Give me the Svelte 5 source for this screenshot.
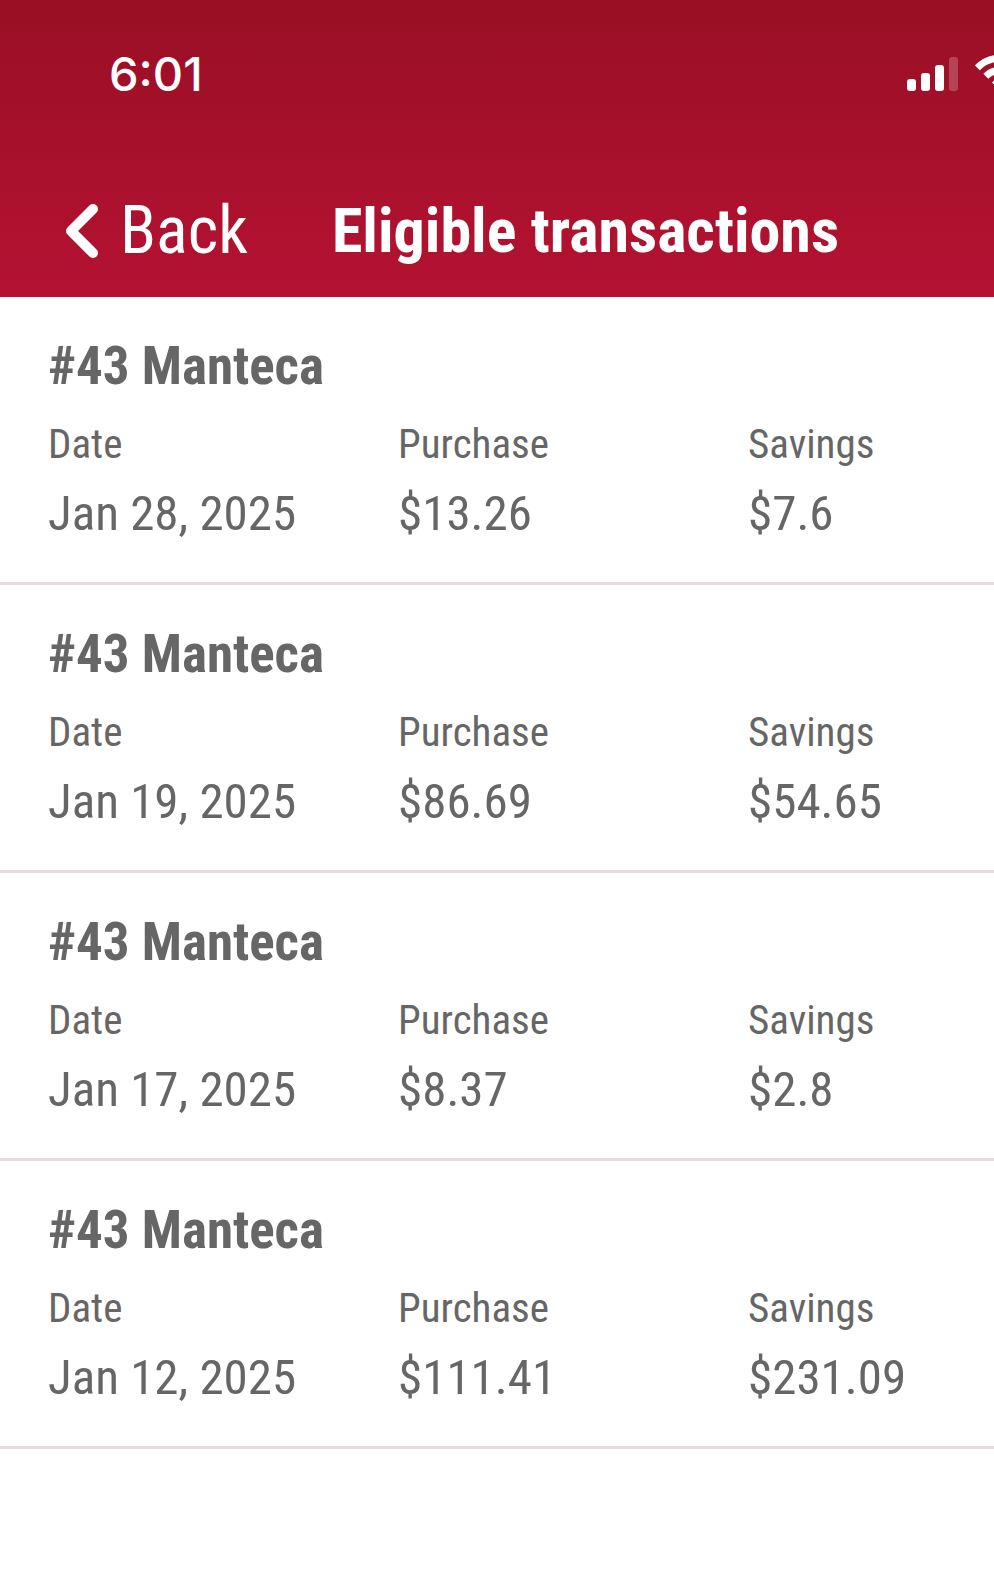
<script>
	const transactions = [
		{ store: '#43 Manteca', date: 'Jan 28, 2025', purchase: '$13.26', savings: '$7.6' },
		{ store: '#43 Manteca', date: 'Jan 19, 2025', purchase: '$86.69', savings: '$54.65' },
		{ store: '#43 Manteca', date: 'Jan 17, 2025', purchase: '$8.37', savings: '$2.8' },
		{ store: '#43 Manteca', date: 'Jan 12, 2025', purchase: '$111.41', savings: '$231.09' }
	];
</script>

<header>
	<div class="status-bar">
		<span class="clock">6:01</span>
		<div class="status-icons">
			<svg width="51" height="34" viewBox="0 0 51 34" fill="#fff" aria-hidden="true">
				<rect x="0" y="22" width="9" height="12" rx="3" />
				<rect x="14" y="16" width="9" height="18" rx="3" />
				<rect x="28" y="8" width="9" height="26" rx="3" />
				<rect x="42" y="0" width="9" height="34" rx="3" opacity="0.22" />
			</svg>
			<svg width="51" height="36" viewBox="0 0 51 36" fill="none" stroke="#fff" stroke-width="7" aria-hidden="true">
				<path d="M2.3 12.8a32.8 32.8 0 0 1 46.4 0" />
				<path d="M10.8 21.3a20.8 20.8 0 0 1 29.4 0" />
				<path d="M17 27.5a12 12 0 0 1 17 0L25.500 36Z" fill="#fff" stroke="none" />
			</svg>
		</div>
	</div>
	<nav>
		<button type="button">
			<svg width="32" height="54" viewBox="0 0 32 54" fill="none" stroke="#fff" stroke-width="10" stroke-linecap="round" stroke-linejoin="round" aria-hidden="true">
				<path d="M27 5 5 27l22 22" />
			</svg>
			Back
		</button>
		<h1>Eligible transactions</h1>
	</nav>
</header>

<main>
	{#each transactions as item}
		<article>
			<h2>{item.store}</h2>
			<dl>
				<div>
					<dt>Date</dt>
					<dd>{item.date}</dd>
				</div>
				<div>
					<dt>Purchase</dt>
					<dd>{item.purchase}</dd>
				</div>
				<div>
					<dt>Savings</dt>
					<dd>{item.savings}</dd>
				</div>
			</dl>
		</article>
	{/each}
</main>

<style>
	:global(body) {
		margin: 0;
		background: #fff;
		color: #666;
		font-family: 'Roboto Condensed', 'Liberation Sans Narrow', Roboto, sans-serif;
	}

	header {
		overflow: hidden;
		background: linear-gradient(#990f24, #b51232);
		color: #fff;
	}

	.status-bar {
		display: flex;
		justify-content: space-between;
		align-items: flex-end;
		padding: 55px 0 0 109px;
	}

	.clock {
		font: 500 47px/34px Inter, sans-serif;
	}

	/* the icon group runs past the right edge of the screen */
	.status-icons {
		display: flex;
		align-items: flex-end;
		gap: 17px;
		margin-right: -32px;
	}

	nav {
		display: flex;
		align-items: center;
		gap: 84px;
		padding: 102px 0 28px 66px;
	}

	button {
		display: flex;
		align-items: center;
		gap: 22px;
		padding: 0;
		border: 0;
		background: none;
		color: inherit;
		font: inherit;
		font-size: 66px;
		line-height: 76px;
	}

	h1 {
		margin: 0;
		font-size: 62px;
		line-height: 72px;
		white-space: nowrap;
	}

	article {
		padding: 39px 0 31px 48px;
		border-bottom: 3px solid #e4dddf;
	}

	h2 {
		margin: 0;
		font-size: 53px;
		line-height: 60px;
	}

	dl {
		display: grid;
		grid-template-columns: 37% 37% 1fr;
		margin: 15px 0 0;
	}

	dt {
		font-size: 41px;
		line-height: 66px;
	}

	dd {
		margin: 0;
		font-size: 49px;
		line-height: 74px;
	}
</style>
